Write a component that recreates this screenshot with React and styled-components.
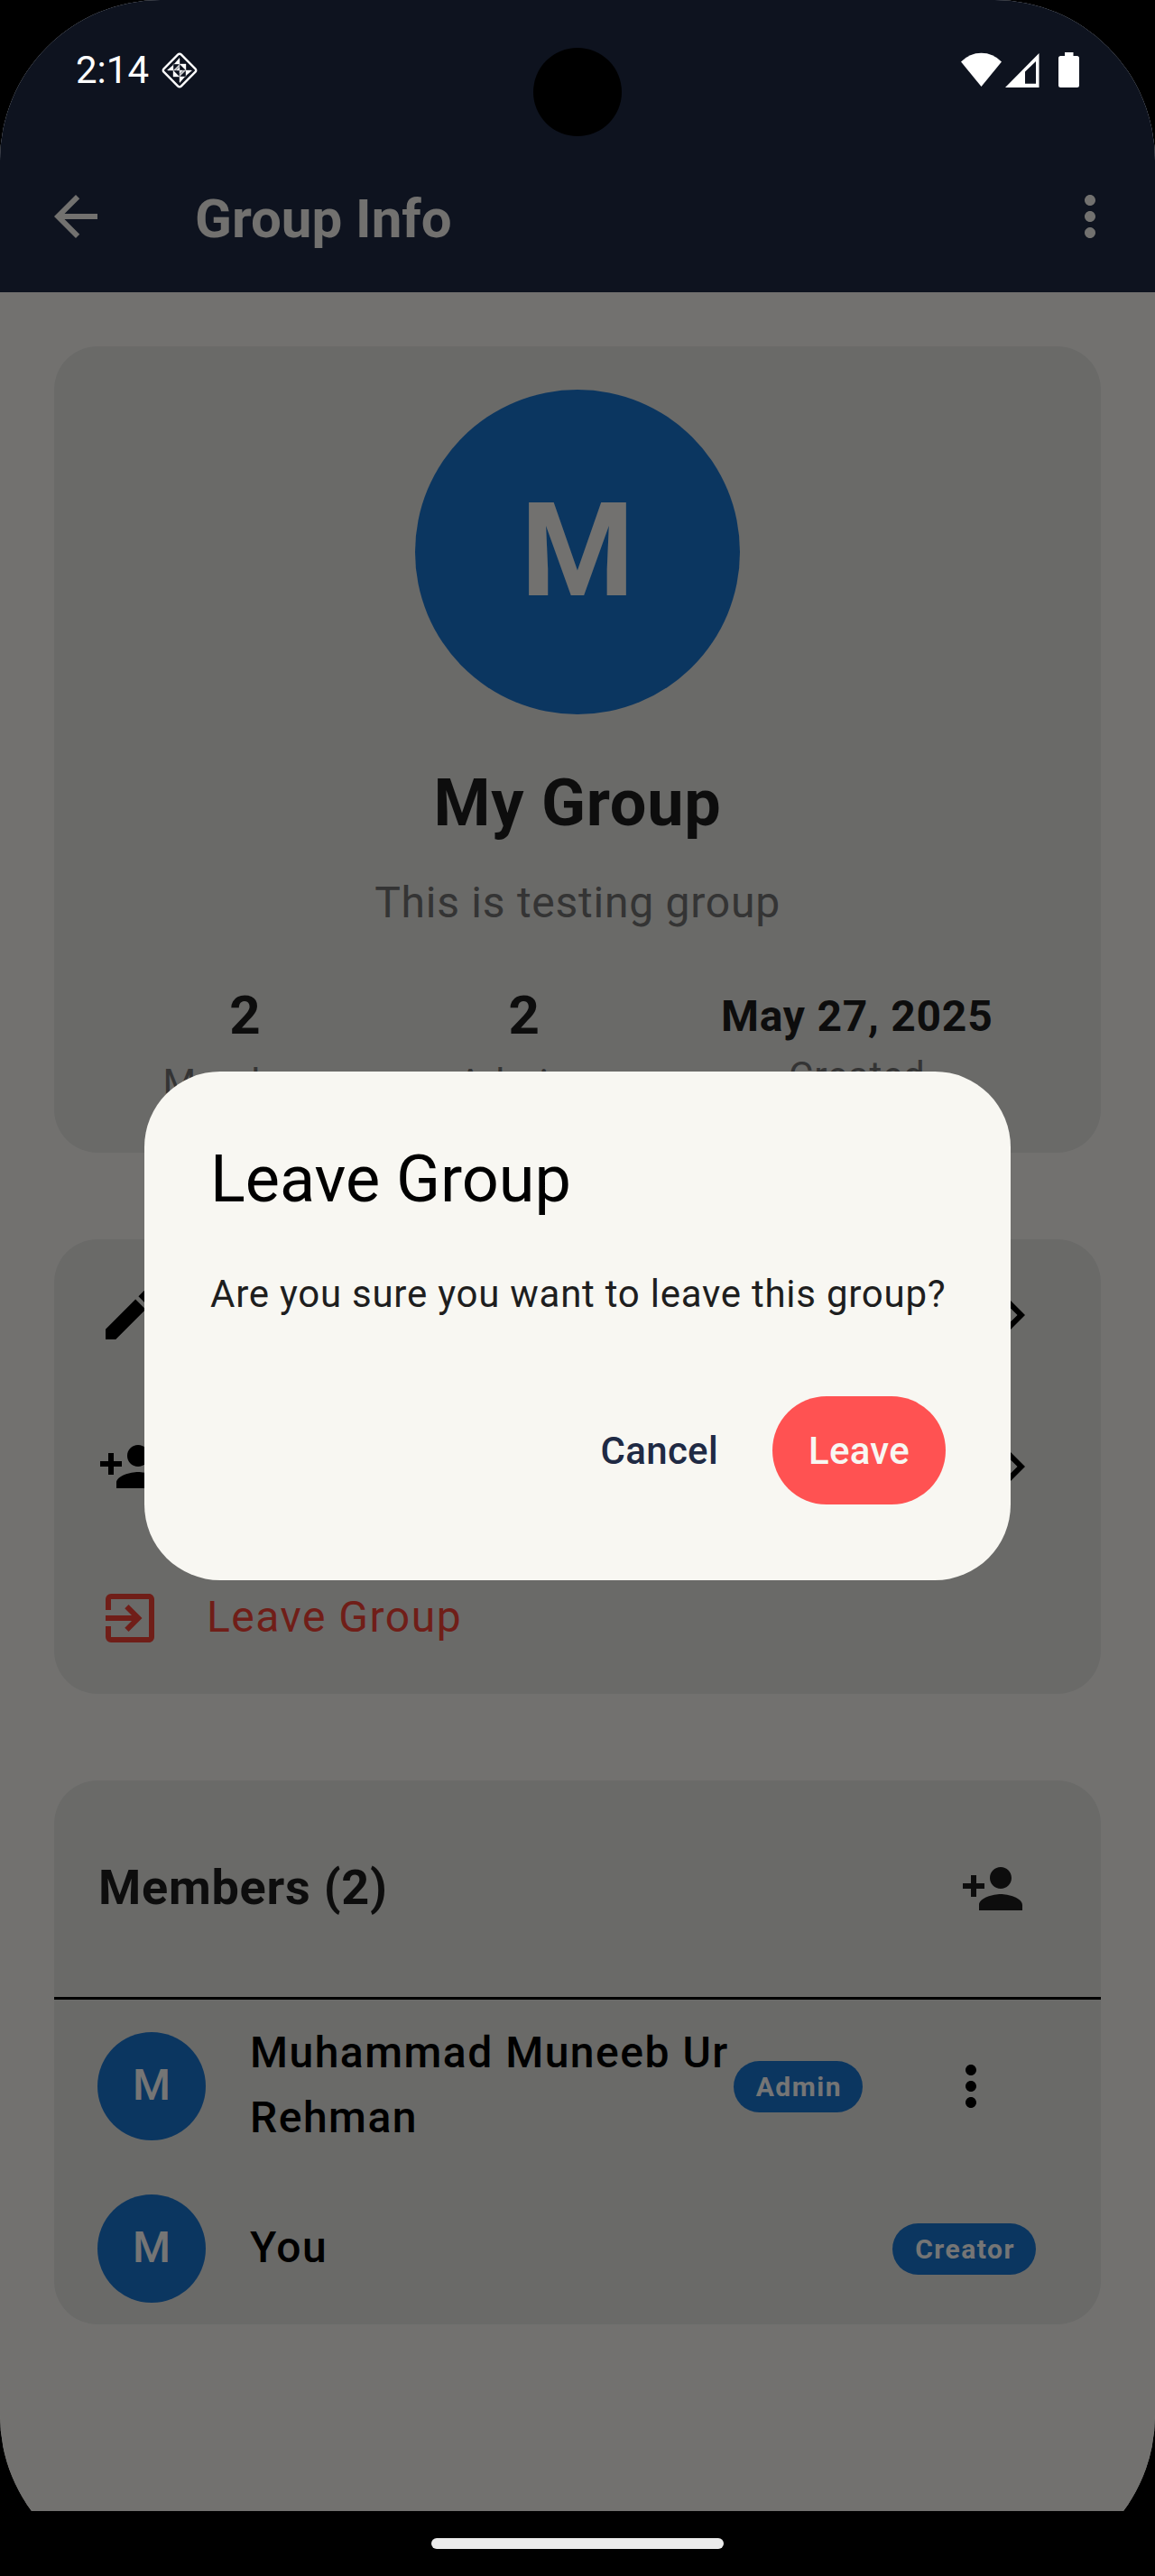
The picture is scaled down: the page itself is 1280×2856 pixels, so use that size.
import React from "react";
import styled, { createGlobalStyle } from "styled-components";
import {
  MdArrowBack,
  MdChevronRight,
  MdEdit,
  MdExitToApp,
  MdMoreVert,
  MdPersonAdd,
} from "react-icons/md";

const GlobalStyle = createGlobalStyle`
  *, *::before, *::after { box-sizing: border-box; }
  body {
    margin: 0;
    background: #000;
    font-family: Roboto, "Noto Sans", sans-serif;
  }
  button { font-family: inherit; border: 0; padding: 0; background: none; }
  h1, h2, p { margin: 0; }
  svg { display: block; flex: none; }
`;

const Phone = styled.div`
  position: relative;
  display: flex;
  flex-direction: column;
  width: 1280px;
  height: 2856px;
  overflow: hidden;
  border-radius: 178px;
  background: #000;
`;

const Screen = styled.main`
  display: flex;
  flex-direction: column;
  height: 2784px;
  background: #f8f7f2;
`;

const AppBar = styled.header`
  display: flex;
  align-items: center;
  height: 324px;
  padding: 156px 36px 0 48px;
  background: #1f2a44;
  color: #f8f7f2;
`;

const AppTitle = styled.h1`
  flex: 1;
  padding: 5px 0 0 96px;
  font-size: 60px;
  font-weight: 700;
  line-height: 72px;
`;

const Content = styled.div`
  display: flex;
  flex-direction: column;
  gap: 96px;
  padding: 60px;
`;

const Card = styled.section`
  display: flex;
  flex-direction: column;
  border-radius: 48px;
  background: #e6e6e3;
  overflow: hidden;
`;

const Profile = styled(Card)`
  align-items: center;
  height: 894px;
  padding: 48px;
`;

const Avatar = styled.div`
  display: flex;
  align-items: center;
  justify-content: center;
  flex: none;
  width: ${(p) => p.$size}px;
  height: ${(p) => p.$size}px;
  padding-bottom: 3px;
  border-radius: 50%;
  background: #1976d2;
  color: ${(p) => p.$ink};
  font-size: ${(p) => p.$font}px;
  font-weight: ${(p) => p.$weight};
`;

const GroupName = styled.h2`
  margin-top: 51px;
  font-size: 72px;
  font-weight: 700;
  line-height: 96px;
  letter-spacing: 0.75px;
  color: #1e1e1e;
`;

const Description = styled.p`
  margin-top: 26px;
  font-size: 48px;
  line-height: 72px;
  letter-spacing: 0.75px;
  color: #727272;
`;

const Stats = styled.div`
  display: flex;
  align-items: flex-start;
  justify-content: space-around;
  align-self: stretch;
  margin-top: 43px;
`;

const Stat = styled.div`
  display: flex;
  flex-direction: column;
  align-items: center;
  padding: ${(p) => (p.$compact ? 11 : 0)}px 0 0 1px;
`;

const StatValue = styled.span`
  font-size: ${(p) => (p.$compact ? 48 : 60)}px;
  line-height: ${(p) => (p.$compact ? 72 : 91)}px;
  font-weight: 700;
  letter-spacing: 0.75px;
  color: #1e1e1e;
`;

const StatLabel = styled.span`
  font-size: 42px;
  line-height: 60px;
  letter-spacing: 0.75px;
  color: #727272;
`;

const Tile = styled.div`
  display: flex;
  align-items: center;
  height: 168px;
  padding: 0 60px 0 48px;
  font-size: 48px;
  letter-spacing: 1.5px;
  color: ${(p) => p.$ink};
`;

const TileLabel = styled.span`
  flex: 1;
  padding: 0 0 3px 49px;
`;

const MembersHeader = styled.div`
  display: flex;
  align-items: center;
  justify-content: space-between;
  height: 240px;
  padding: 0 84px 0 49px;
  color: #1e1e1e;
`;

const MembersTitle = styled.h2`
  padding-bottom: 3px;
  font-size: 54px;
  font-weight: 700;
  letter-spacing: 0.75px;
`;

const MemberList = styled.div`
  display: flex;
  flex-direction: column;
  border-top: 3px solid #000;
`;

const Member = styled.div`
  display: flex;
  align-items: center;
  height: 180px;
  padding: 12px 72px 0 48px;
`;

const MemberName = styled.span`
  flex: 1;
  padding: 0 0 3px 49px;
  font-size: 48px;
  font-weight: 500;
  line-height: 72px;
  letter-spacing: 1.5px;
  color: #000;
`;

const Badge = styled.span`
  height: 57px;
  padding: 0 23px 0 25px;
  border-radius: 36px;
  background: #1976d2;
  font-size: 30px;
  font-weight: 700;
  line-height: 58px;
  letter-spacing: 1.5px;
  color: #fff;
`;

const MenuButton = styled.button`
  margin-left: 48px;
  padding: 36px;
  color: #000;
`;

const Scrim = styled.div`
  position: absolute;
  inset: 0 0 72px;
  display: flex;
  align-items: flex-start;
  justify-content: center;
  padding-top: 1188px;
  background: rgba(0, 0, 0, 0.54);
`;

const Dialog = styled.div`
  display: flex;
  flex-direction: column;
  width: 960px;
  height: 564px;
  padding: 72px;
  border-radius: 84px;
  background: #f8f7f2;
`;

const DialogTitle = styled.h2`
  padding-left: 1px;
  font-size: 72px;
  font-weight: 400;
  line-height: 96px;
  color: #000;
`;

const DialogText = styled.p`
  margin-top: 49px;
  padding-left: 1px;
  font-size: 42px;
  line-height: 60px;
  letter-spacing: 0.75px;
  white-space: nowrap;
  color: #1e1e1e;
`;

const Actions = styled.div`
  display: flex;
  justify-content: flex-end;
  gap: 24px;
  margin-top: 83px;
`;

const ActionButton = styled.button`
  height: 120px;
  padding: 0 ${(p) => (p.$filled ? 40 : 36)}px;
  border-radius: 60px;
  background: ${(p) => (p.$filled ? "#ff5252" : "transparent")};
  color: ${(p) => (p.$filled ? "#f8f7f2" : "#1f2a44")};
  font-size: 42px;
  font-weight: 500;
  line-height: 119px;
  letter-spacing: 0.3px;
`;

const StatusBar = styled.div`
  position: absolute;
  inset: 0 0 auto;
  display: flex;
  align-items: center;
  justify-content: space-between;
  height: 156px;
  padding: 0 81px 0 84px;
  color: #fff;
`;

const StatusGroup = styled.div`
  display: flex;
  align-items: center;
  height: 156px;
`;

const Clock = styled.span`
  width: 94px;
  font-size: 42px;
  line-height: 156px;
`;

const Camera = styled.div`
  position: absolute;
  top: 53px;
  left: 591px;
  width: 98px;
  height: 98px;
  border-radius: 50%;
  background: #000;
`;

const NavBar = styled.nav`
  display: flex;
  justify-content: center;
  height: 72px;
  padding-top: 30px;
  background: #000;
`;

const NavHandle = styled.div`
  width: 324px;
  height: 12px;
  border-radius: 6px;
  background: #ebebeb;
`;

const DiamondIcon = () => (
  <svg width="42" height="156" viewBox="0 0 42 156">
    <g transform="translate(21 78)">
      <rect x="-13.6" y="-13.6" width="27.2" height="27.2" rx="2.4" transform="rotate(45)" fill="none" stroke="#fff" strokeWidth="2.4" />
      <g fill="#fff">
        <path d="M0-14V-7H-6zM-7-6V0H-14zM7 6V0H14zM0 14V7H6z" />
        <path d="M0-7H7V0zM-7 0V7H0z" />
        <path d="M-7 0L0-7V-4.500L-4.500 0zM7 0L0 7V4.500L4.500 0z" opacity="0.8" />
        <path d="M-4 0L0-4V0zM4 0L0 4V0z" />
      </g>
      <path d="M-13 0H13M0-13V13M-7 0V-7H7V7H-7z" fill="none" stroke="#fff" strokeWidth="0.8" opacity="0.45" />
    </g>
  </svg>
);

const SignalIcons = () => (
  <svg width="134" height="156" viewBox="1065 0 134 156" fill="#fff">
    <path d="M1087.5 96L1065 68.5Q1074.500 58.800 1087.500 58.800T1110 68.500z" />
    <path fillRule="evenodd" d="M1114 97L1151.500 59V97zM1136 79.500V92.700H1148V68z" />
    <path d="M1180 58H1189.500V62H1193.500Q1196 62 1196 64.500V94.500Q1196 97 1193.500 97H1175.500Q1173 97 1173 94.500V64.500Q1173 62 1175.500 62H1180z" />
  </svg>
);

const STATS = [
  { value: "2", label: "Members" },
  { value: "2", label: "Admins" },
  { value: "May 27, 2025", label: "Created", compact: true },
];

const ACTIONS = [
  { id: "edit", Icon: MdEdit, ink: "#000", chevron: true },
  { id: "add", Icon: MdPersonAdd, ink: "#000", chevron: true },
  { id: "leave", Icon: MdExitToApp, label: "Leave Group", ink: "#f44336" },
];

const MEMBERS = [
  { name: "Muhammad Muneeb Ur Rehman", role: "Admin", menu: true },
  { name: "You", role: "Creator" },
];

export default function App() {
  return (
    <>
      <GlobalStyle />
      <Phone>
        <Screen>
          <AppBar>
            <MdArrowBack size={72} />
            <AppTitle>Group Info</AppTitle>
            <MdMoreVert size={72} />
          </AppBar>
          <Content>
            <Profile>
              <Avatar $size={360} $font={144} $weight={700} $ink="#f8f7f2">M</Avatar>
              <GroupName>My Group</GroupName>
              <Description>This is testing group</Description>
              <Stats>
                {STATS.map(({ value, label, compact }) => (
                  <Stat key={label} $compact={compact}>
                    <StatValue $compact={compact}>{value}</StatValue>
                    <StatLabel>{label}</StatLabel>
                  </Stat>
                ))}
              </Stats>
            </Profile>
            <Card>
              {ACTIONS.map(({ id, Icon, label, ink, chevron }) => (
                <Tile key={id} $ink={ink}>
                  <Icon size={72} />
                  <TileLabel>{label}</TileLabel>
                  {chevron && <MdChevronRight size={72} />}
                </Tile>
              ))}
            </Card>
            <Card>
              <MembersHeader>
                <MembersTitle>Members (2)</MembersTitle>
                <MdPersonAdd size={72} />
              </MembersHeader>
              <MemberList>
                {MEMBERS.map(({ name, role, menu }) => (
                  <Member key={name}>
                    <Avatar $size={120} $font={48} $weight={500} $ink="#fff">M</Avatar>
                    <MemberName>{name}</MemberName>
                    <Badge>{role}</Badge>
                    {menu && (
                      <MenuButton>
                        <MdMoreVert size={72} />
                      </MenuButton>
                    )}
                  </Member>
                ))}
              </MemberList>
            </Card>
          </Content>
        </Screen>
        <NavBar>
          <NavHandle />
        </NavBar>
        <Scrim>
          <Dialog>
            <DialogTitle>Leave Group</DialogTitle>
            <DialogText>Are you sure you want to leave this group?</DialogText>
            <Actions>
              <ActionButton>Cancel</ActionButton>
              <ActionButton $filled>Leave</ActionButton>
            </Actions>
          </Dialog>
        </Scrim>
        <StatusBar>
          <StatusGroup>
            <Clock>2:14</Clock>
            <DiamondIcon />
          </StatusGroup>
          <SignalIcons />
        </StatusBar>
        <Camera />
      </Phone>
    </>
  );
}
